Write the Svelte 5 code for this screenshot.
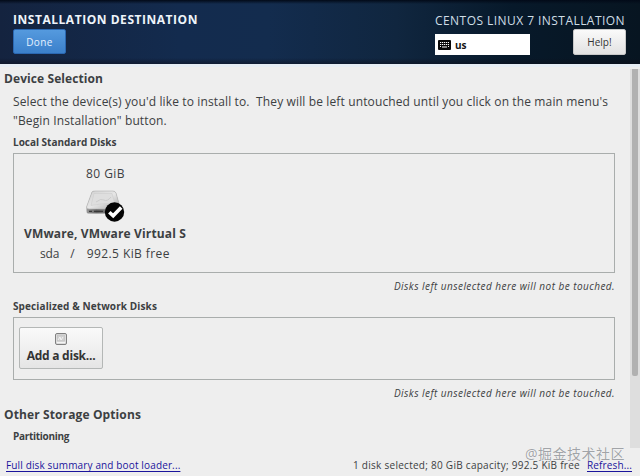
<script>
  const disk = { size: '80 GiB', name: 'VMware, VMware Virtual S', device: 'sda', free: '992.5 KiB free' };
  const note = 'Disks left unselected here will not be touched.';
</script>

<div class="window">
  <header>
    <div class="left">
      <h1>INSTALLATION DESTINATION</h1>
      <button class="done">Done</button>
    </div>
    <div class="right">
      <div class="product">CENTOS LINUX 7 INSTALLATION</div>
      <div class="tools">
        <div class="layout">
          <svg width="13" height="10" viewBox="0 0 13 10">
            <rect width="13" height="10" rx="1" fill="#080808" />
            <path d="M2 2.500h9M2 4.500h9" stroke="#fff" stroke-width="1.1" stroke-dasharray="1.2 .75" />
            <path d="M2 6.500h1M4 7h5M10 6.500h1" stroke="#fff" stroke-width="1" />
          </svg>
          <span>us</span>
        </div>
        <button class="help">Help!</button>
      </div>
    </div>
  </header>

  <div class="body">
    <main>
      <h2>Device Selection</h2>
      <div class="section">
        <p class="intro">
          <span class="line1">Select the device(s) you'd like to install to.&nbsp; They will be left untouched until you click on the main menu's</span>
          <span class="line2">"Begin Installation" button.</span>
        </p>
        <h3 class="local">Local Standard Disks</h3>
        <div class="frame disks">
          <div class="disk">
            <div class="size">{disk.size}</div>
            <svg class="drive" width="42" height="34" viewBox="0 0 42 34">
              <defs>
                <linearGradient id="top" x1="0" y1="0" x2="1" y2="1">
                  <stop offset="0" stop-color="#d0d0d0" />
                  <stop offset=".5" stop-color="#e6e6e6" />
                  <stop offset="1" stop-color="#a8a8a8" />
                </linearGradient>
                <linearGradient id="front" x1="0" y1="0" x2="1" y2="0">
                  <stop offset="0" stop-color="#999" />
                  <stop offset=".3" stop-color="#666" />
                  <stop offset="1" stop-color="#999" />
                </linearGradient>
              </defs>
              <path d="M8 4Q9 3 11 3H29Q31 3 32 5L36 19V24Q36 25.500 34 25.500H4Q2.500 25.500 2.500 23V19Z" fill="url(#front)" />
              <path d="M8 4Q9 3 11 3H29Q31 3 32 5L36 19Q35 21 33 21H5Q2.500 21 2.500 19Z" fill="url(#top)" stroke="#b4b4b4" stroke-width=".6" />
              <path d="M10 5.500H28L31 16Q20 14.500 7 17.500Z" fill="#dedede" stroke="#cdcdcd" stroke-width=".6" />
              <path d="M12 14Q17 10 20 12T27 9" fill="none" stroke="#c6c6c6" stroke-width=".8" />
              <path d="M5 23.300h3M10 23.300h9" stroke="#383838" stroke-width="1.2" />
              <circle cx="30.500" cy="24" r="9.700" fill="#050505" />
              <path d="M25.300 24.200L29.200 27.800L37.200 19.600" fill="none" stroke="#fff" stroke-width="3.600" />
            </svg>
            <div class="name">{disk.name}</div>
            <div class="detail">
              <span class="dev">{disk.device}</span><span class="slash">/</span><span class="free">{disk.free}</span>
            </div>
          </div>
        </div>
        <div class="note">{note}</div>
        <h3 class="special">Specialized &amp; Network Disks</h3>
        <div class="frame network">
          <button class="add">
            <svg width="12" height="12" viewBox="0 0 12 12">
              <rect x=".5" y=".5" width="11" height="11" rx="1.500" fill="#ddd" stroke="#808080" />
              <rect x="2.500" y="2" width="7" height="6" fill="#d0d0d0" stroke="#bbb" stroke-width=".6" />
              <path d="M3 7l2-3 1 3 2-3M2 9.500h8" fill="none" stroke="#f6f6f6" stroke-width=".9" />
            </svg>
            <span>Add a disk...</span>
          </button>
        </div>
        <div class="note">{note}</div>
      </div>
      <h2 class="other">Other Storage Options</h2>
      <div class="section"><h3 class="part">Partitioning</h3></div>
    </main>
    <div class="track"><div class="thumb"></div></div>
  </div>

  <footer>
    <a class="summary" href="#summary">Full disk summary and boot loader...</a>
    <span class="status">1 disk selected; 80 GiB capacity; 992.5 KiB free</span>
    <a class="refresh" href="#refresh">Refresh...</a>
  </footer>
  <div class="watermark">@掘金技术社区</div>
</div>

<style>
  :global(body) { background: #eee; }
  * { box-sizing: border-box; }
  .window {
    position: relative; width: 640px; height: 476px; overflow: hidden;
    display: flex; flex-direction: column; background: #eee; color: #3c4042;
    font: 12px/20px "Open Sans", "Noto Sans", sans-serif; white-space: nowrap;
  }
  h1, h2, h3, p { margin: 0; }
  button { font: 10px/1 "Open Sans", "Noto Sans", sans-serif; padding: 0; border-radius: 2px; }
  header {
    height: 64px; flex: none; display: flex; justify-content: space-between; padding: 10px 14px 0 13px;
    background:
      linear-gradient(to bottom, #020a18 0, rgba(2, 10, 24, 0) 4px, rgba(2, 10, 24, 0) 58px, rgba(12, 12, 24, .5) 64px),
      linear-gradient(to right, #14233f 0, #132b4e 28%, #132c4e 42%, #10263f 62%, #07192a 80%, #071521 100%);
  }
  h1 { font-size: 12px; line-height: 19px; font-weight: 700; letter-spacing: .535px; color: #eef4fa; }
  .done {
    display: block; width: 53px; height: 25px; color: #e5f1ff; letter-spacing: .4px;
    border: 1px solid #2b68b2; background: linear-gradient(#559ade, #3b80cb);
  }
  .right { width: 191px; }
  .product { height: 18px; line-height: 21px; letter-spacing: .447px; color: #cfdee6; }
  .tools { display: flex; justify-content: space-between; }
  .layout {
    width: 95px; height: 21px; margin-top: 6px; padding-left: 3px; background: #fff; color: #151515;
    display: flex; align-items: center; gap: 4px; font-size: 10px; font-weight: 700;
  }
  .help {
    width: 53px; height: 26px; margin-top: 1px; color: #333; border: 1px solid #c8c8c8;
    background: linear-gradient(#fafafa, #e2e2e2);
  }
  .body { flex: 1; min-height: 0; display: flex; justify-content: space-between; border-top: 3px solid #e6edf4; }
  main { width: 615px; padding-left: 4px; }
  h2 { font-size: 12px; line-height: 20px; height: 20px; letter-spacing: .085px; margin-top: 2px; }
  .section { margin-left: 9px; }
  .intro { padding-top: 3px; height: 44px; line-height: 19px; }
  .intro span { display: block; }
  .line1, .line2 { letter-spacing: .13px; }
  h3 { font-size: 10px; line-height: 16px; }
  .local { height: 20px; line-height: 18px; letter-spacing: -.01px; }
  .frame { border: 1px solid #a9adac; }
  .disks { height: 120px; padding: 10px 0 0 6px; }
  .disk { width: 170px; display: flex; flex-direction: column; align-items: center; }
  .size { height: 20px; letter-spacing: .44px; margin-left: 1px; }
  .drive { margin-top: 4px; }
  .name { font-weight: 700; height: 20px; letter-spacing: .14px; margin-top: 2px; }
  .detail { display: flex; height: 20px; }
  .dev { letter-spacing: -.2px; }
  .slash { margin: 0 12px 0 11px; }
  .free { letter-spacing: .42px; }
  .note { font-size: 10px; font-style: italic; text-align: right; line-height: 14px; height: 23px; padding-top: 6px; letter-spacing: .451px; }
  .special { line-height: 20px; height: 21px; letter-spacing: .113px; }
  .network { height: 63px; padding: 9px 0 0 5px; }
  .add {
    width: 84px; height: 42px; border: 1px solid #b4b7b6; color: #333; background: linear-gradient(#fafafa, #e5e5e5);
    display: flex; flex-direction: column; align-items: center; padding-top: 5px;
    font-size: 12px; font-weight: 700; letter-spacing: -.25px;
  }
  .add svg { flex: none; }
  .add span { line-height: 21px; }
  .other { margin-top: 2px; letter-spacing: .118px; }
  .part { line-height: 22px; letter-spacing: -.307px; }
  .track { width: 10px; height: 379px; margin-top: 2px; background: #dedede; padding-left: 2px; }
  .thumb { width: 6px; height: 307px; background: #b1b1b1; border-radius: 0 0 2px 2px; }
  footer { height: 22px; flex: none; display: flex; font-size: 10px; line-height: 22px; padding: 0 8px 0 6px; }
  a { color: #1a149c; text-underline-offset: 2px; }
  .summary { letter-spacing: .14px; }
  .status { margin-left: auto; letter-spacing: .273px; }
  .refresh { margin-left: 7px; letter-spacing: .137px; }
  .watermark {
    position: absolute; left: 525px; top: 444px; font: 14px/20px "Open Sans", "Noto Sans CJK SC", sans-serif;
    letter-spacing: .5px; color: rgba(120, 124, 130, .7); text-shadow: 0 0 1px #fff;
  }
</style>
